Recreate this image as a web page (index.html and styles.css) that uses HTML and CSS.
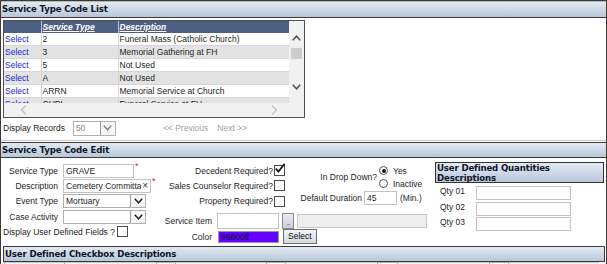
FILE: index.html
```html
<!DOCTYPE html>
<html>
<head>
<meta charset="utf-8">
<link rel="stylesheet" href="styles.css">
</head>
<body>
<div class="page">
  <div class="sec-head first">Service Type Code List</div>
  <div class="list-sec">
    <div class="gridbox">
      <div class="grid-main">
        <div class="grid-view">
          <table class="grid">
            <colgroup><col class="c1"><col class="c2"><col class="c3"></colgroup>
            <thead>
              <tr><th></th><th>Service Type</th><th>Description</th></tr>
            </thead>
            <tbody>
              <tr><td><a class="lnk">Select</a></td><td>2</td><td>Funeral Mass (Catholic Church)</td></tr>
              <tr class="alt"><td><a class="lnk">Select</a></td><td>3</td><td>Memorial Gathering at FH</td></tr>
              <tr><td><a class="lnk">Select</a></td><td>5</td><td>Not Used</td></tr>
              <tr class="alt"><td><a class="lnk">Select</a></td><td>A</td><td>Not Used</td></tr>
              <tr><td><a class="lnk">Select</a></td><td>ARRN</td><td>Memorial Service at Church</td></tr>
              <tr class="alt"><td><a class="lnk">Select</a></td><td>CHPL</td><td>Funeral Service at FH</td></tr>
            </tbody>
          </table>
        </div>
        <div class="hscroll">
          <svg width="7" height="10" viewBox="0 0 7 10"><polyline points="6,0.5 1.5,5 6,9.5" fill="none" stroke="#c4c4c4" stroke-width="1.4"/></svg>
          <svg width="7" height="10" viewBox="0 0 7 10"><polyline points="1,0.5 5.5,5 1,9.5" fill="none" stroke="#c4c4c4" stroke-width="1.4"/></svg>
        </div>
      </div>
      <div class="vscroll">
        <svg class="up" width="9" height="6" viewBox="0 0 9 6"><polyline points="0.8,5.2 4.5,1.2 8.2,5.2" fill="none" stroke="#505050" stroke-width="1.5"/></svg>
        <div class="thumb"></div>
        <svg class="down" width="9" height="6" viewBox="0 0 9 6"><polyline points="0.8,0.8 4.5,4.8 8.2,0.8" fill="none" stroke="#505050" stroke-width="1.5"/></svg>
      </div>
    </div>
    <div class="pager">
      <span class="lbl">Display Records</span>
      <span class="sel recs">
        <span class="val dim">50</span>
        <span class="btn"><svg width="9" height="6" viewBox="0 0 9 6"><polyline points="0.8,0.8 4.5,4.8 8.2,0.8" fill="none" stroke="#7a7a7a" stroke-width="1.3"/></svg></span>
      </span>
      <span class="pg prev">&lt;&lt; Previous</span>
      <span class="pg next">Next &gt;&gt;</span>
    </div>
  </div>

  <div class="sec-head">Service Type Code Edit</div>
  <div class="edit">
    <div class="col-a">
      <span class="lab">Service Type</span>
      <span class="fld"><span class="inp w70"><span class="txt">GRAVE</span></span><span class="req">*</span></span>
      <span class="lab">Description</span>
      <span class="fld"><span class="inp w87"><span class="txt">Cemetery Committal</span><span class="clr">×</span></span><span class="req">*</span></span>
      <span class="lab">Event Type</span>
      <span class="fld"><span class="sel w82"><span class="val">Mortuary</span><span class="btn"><svg width="9" height="6" viewBox="0 0 9 6"><polyline points="0.8,0.8 4.5,4.8 8.2,0.8" fill="none" stroke="#222" stroke-width="1.5"/></svg></span></span></span>
      <span class="lab">Case Activity</span>
      <span class="fld"><span class="sel w82"><span class="val"></span><span class="btn"><svg width="9" height="6" viewBox="0 0 9 6"><polyline points="0.8,0.8 4.5,4.8 8.2,0.8" fill="none" stroke="#222" stroke-width="1.5"/></svg></span></span></span>
      <span class="span-row">Display User Defined Fields ?<span class="cb"></span></span>
    </div>

    <div class="col-mid">
      <div class="mid-top">
        <div class="col-b">
          <span class="lab">Decedent Required?</span>
          <span class="cb"><svg width="12" height="12" viewBox="0 0 12 12"><polyline points="1.8,5.6 4.4,8.6 10.6,0.8" fill="none" stroke="#111" stroke-width="1.7"/></svg></span>
          <span class="lab">Sales Counselor Required?</span>
          <span class="cb"></span>
          <span class="lab">Property Required?</span>
          <span class="cb"></span>
        </div>
        <div class="col-c">
          <div class="dd-row">
            <span class="lab dd-lab">In Drop Down?</span>
            <span class="radios">
              <span class="radio-line"><span class="radio on"></span>Yes</span>
              <span class="radio-line"><span class="radio"></span>Inactive</span>
            </span>
          </div>
          <div class="dur-row">
            <span class="lab dur-lab">Default Duration</span>
            <span class="inp w32"><span class="txt">45</span></span>
            <span class="unit">(Min.)</span>
          </div>
        </div>
      </div>
      <div class="mid-bot">
        <div class="item-row">
          <span class="lab mlab">Service Item</span>
          <span class="inp w62 h16"></span>
          <span class="dots">...</span>
          <span class="inp dis"></span>
        </div>
        <div class="color-row">
          <span class="lab mlab">Color</span>
          <span class="color-box">#6600ff</span>
          <span class="btn-sel">Select</span>
        </div>
      </div>
    </div>

    <div class="col-d">
      <div class="box-head">User Defined Quantities Descriptions</div>
      <div class="qty">
        <span class="lab">Qty 01</span><span class="inp w95"></span>
        <span class="lab">Qty 02</span><span class="inp w95"></span>
        <span class="lab">Qty 03</span><span class="inp w95"></span>
      </div>
    </div>
  </div>

  <div class="sec-head boxed">User Defined Checkbox Descriptions</div>
  <div class="cb-row">
    <span class="cell" style="width:60px"></span>
    <span class="cell" style="width:92px"></span>
    <span class="cell white" style="width:19px"></span>
    <span class="cell" style="width:91px"></span>
    <span class="cell white" style="width:19px"></span>
    <span class="cell" style="width:92px"></span>
    <span class="cell white" style="width:20px"></span>
    <span class="cell" style="width:92px"></span>
    <span class="cell white" style="width:19px"></span>
    <span class="cell" style="width:91px"></span>
  </div>
</div>
</body>
</html>
```

FILE: styles.css
```css
html, body {
  margin: 0;
  padding: 0;
  background: #fff;
}
body {
  width: 607px;
  height: 264px;
  overflow: hidden;
}
.page {
  width: 605px;
  height: 263px;
  border: 1px solid #3a3a3a;
  border-bottom: 0;
  overflow: hidden;
  font-family: "Liberation Sans", Arial, sans-serif;
  font-size: 8.5px;
  color: #1e1e1e;
}

/* section headers */
.sec-head {
  box-sizing: border-box;
  height: 16px;
  line-height: 14px;
  padding-left: 1px;
  font-family: "DejaVu Sans", Verdana, sans-serif;
  font-weight: bold;
  font-size: 8.6px;
  letter-spacing: -0.15px;
  color: #0f1626;
  background: linear-gradient(#e3eaf2, #b7c7d9);
  border-top: 1px solid #3a3a3a;
  border-bottom: 1px solid #3a3a3a;
  margin-top: 1px;
  white-space: nowrap;
}
.sec-head.first {
  height: 17px;
  line-height: 15px;
  margin-top: 0;
  border-top: 1px solid #b8b8b8;
}
.sec-head.boxed {
  width: 602px;
  margin: 0 0 0 2px;
  border: 1px solid #3a3a3a;
  padding-left: 1px;
}

/* list section */
.list-sec {
  height: 120px;
  border-bottom: 1px solid #cacaca;
}
.gridbox {
  box-sizing: border-box;
  display: flex;
  width: 302px;
  height: 98px;
  margin: 2px 0 0 2px;
  border: 1px solid #505050;
}
.grid-main {
  width: 285px;
  display: flex;
  flex-direction: column;
}
.grid-view {
  height: 82px;
  overflow: hidden;
}
.grid {
  width: 285px;
  table-layout: fixed;
  border-collapse: collapse;
}
.grid .c1 { width: 37px; }
.grid .c2 { width: 77px; }
.grid .c3 { width: 171px; }
.grid th {
  height: 12px;
  padding: 0 1px;
  background: #4d6084;
  color: #fff;
  font-weight: bold;
  font-style: italic;
  text-decoration: underline;
  text-align: left;
  border-left: 1px solid #b9c3d2;
  line-height: 11px;
  white-space: nowrap;
}
.grid th:first-child { border-left: 0; }
.grid td {
  height: 12px;
  padding: 0 1px;
  line-height: 12px;
  border: 1px solid #d6d6d6;
  border-top: 0;
  white-space: nowrap;
  overflow: hidden;
}
.grid td:first-child { border-left: 0; }
.grid tr.alt td { background: #e3e3e3; }
.lnk { color: #1f1fd8; }
.hscroll {
  flex: 1;
  background: #f1f1f1;
  display: flex;
  align-items: center;
  justify-content: space-between;
  padding: 0 11px 0 16px;
}
.vscroll {
  width: 15px;
  background: #f1f1f1;
  display: flex;
  flex-direction: column;
  align-items: center;
}
.vscroll .up { margin-top: 14px; }
.vscroll .thumb {
  width: 11px;
  height: 11px;
  margin-top: 7px;
  background: #cdcdcd;
}
.vscroll .down { margin-top: 25px; }

.pager {
  height: 20px;
  display: flex;
  align-items: center;
  padding-left: 2px;
}
.pager .recs { margin-left: 8px; width: 43px; height: 15px; }
.dim { color: #8a8a8a; }
.pg { color: #a0a0a0; }
.pager .prev { margin-left: 47px; }
.pager .next { margin-left: 9px; }

/* form controls */
.inp, .sel {
  box-sizing: border-box;
  display: inline-flex;
  align-items: center;
  height: 14px;
  border: 1px solid #c2c2c2;
  background: #fff;
  overflow: hidden;
}
.sel { border-color: #b0b0b0; }
.inp .txt, .sel .val {
  flex: 1;
  padding-left: 2px;
  white-space: nowrap;
  overflow: hidden;
}
.sel .btn {
  box-sizing: border-box;
  width: 15px;
  height: 100%;
  display: flex;
  align-items: center;
  justify-content: center;
  border-left: 1px solid #9a9a9a;
  background: #f7f7f7;
}
.clr { padding: 0 2px 0 1px; font-size: 10px; color: #333; }
.req {
  color: #e02020;
  font-size: 9px;
  line-height: 7px;
  align-self: flex-start;
  margin-left: 1px;
}
.w70 { width: 71px; }
.w87 { width: 88px; }
.w82 { width: 83px; }
.w32 { width: 33px; }
.w62 { width: 62px; }
.w95 { width: 95px; }
.h16 { height: 16px; }

.cb {
  box-sizing: border-box;
  width: 11px;
  height: 11px;
  border: 1px solid #4a4a4a;
  background: #fff;
  display: inline-flex;
  align-items: flex-end;
  justify-content: flex-start;
  overflow: visible;
}
.cb svg { margin: 0 0 0 -1px; flex: none; }

/* edit section */
.edit {
  height: 88px;
  box-sizing: border-box;
  padding: 5px 0 0 2px;
  display: flex;
  align-items: flex-start;
}
.lab { text-align: right; white-space: nowrap; }
.col-a {
  width: 152px;
  display: grid;
  grid-template-columns: 55px auto;
  column-gap: 5px;
  grid-auto-rows: 15.33px;
  align-items: center;
}
.fld { display: flex; align-items: center; height: 100%; }
.span-row {
  grid-column: 1 / 3;
  display: flex;
  align-items: center;
  gap: 2px;
  white-space: nowrap;
}
.col-mid {
  width: 270px;
  margin-left: 5px;
}
.mid-top {
  display: flex;
  height: 46px;
}
.col-b {
  display: grid;
  grid-template-columns: 113px 11px;
  column-gap: 1px;
  grid-auto-rows: 15.33px;
  align-items: center;
}
.col-c { margin-left: 11px; }
.dd-row { display: flex; align-items: center; height: 26px; margin-top: 1px; }
.dd-lab { width: 81px; }
.radios { display: flex; flex-direction: column; margin-left: 2px; }
.radio-line { display: flex; align-items: center; height: 13px; gap: 5px; }
.radio {
  box-sizing: border-box;
  width: 9px;
  height: 9px;
  border: 1px solid #555;
  border-radius: 50%;
  background: #fff;
  display: flex;
  align-items: center;
  justify-content: center;
}
.radio.on::after {
  content: "";
  width: 4px;
  height: 4px;
  border-radius: 50%;
  background: #111;
}
.dur-row { display: flex; align-items: center; height: 15px; }
.dur-lab { width: 66px; }
.dur-row .inp { margin-left: 2px; }
.unit { margin-left: 3px; }

.mid-bot { margin-top: 3px; }
.item-row, .color-row { display: flex; align-items: center; }
.item-row { height: 17px; }
.color-row { height: 15px; }
.mlab { width: 52px; margin-right: 5px; }
.dots {
  box-sizing: border-box;
  width: 12px;
  height: 16px;
  margin-left: 3px;
  border: 1px solid #8c8c8c;
  background: linear-gradient(#e9edf2, #c7cdd6);
  color: #555;
  font-size: 7px;
  line-height: 18px;
  letter-spacing: -1px;
  text-align: center;
  overflow: hidden;
}
.inp.dis {
  width: 130px;
  margin-left: 3px;
  background: #efefef;
  border-color: #c6c6c6;
}
.color-box {
  box-sizing: border-box;
  width: 61px;
  height: 12px;
  margin-left: 1px;
  background: #6600ff;
  border: 1px solid #9a9a9a;
  color: #0c0a2a;
  line-height: 10px;
  padding-left: 2px;
}
.btn-sel {
  box-sizing: border-box;
  height: 15px;
  margin-left: 4px;
  padding: 0 4px;
  border: 1px solid #6e6e6e;
  background: linear-gradient(#f2f4f7, #d3d8e0);
  line-height: 13px;
  color: #111;
}

.col-d {
  width: 169px;
  margin-left: 5px;
  margin-top: -1px;
}
.box-head {
  box-sizing: border-box;
  height: 21px;
  border: 1px solid #333;
  background: linear-gradient(#e3eaf2, #b7c7d9);
  font-family: "DejaVu Sans", Verdana, sans-serif;
  font-weight: bold;
  font-size: 8.6px;
  letter-spacing: -0.15px;
  line-height: 10px;
  padding: 0 0 0 1px;
  color: #0f1626;
}
.qty {
  margin-top: 3px;
  display: grid;
  grid-template-columns: 30px 95px;
  column-gap: 11px;
  grid-auto-rows: 15.5px;
  align-items: start;
}

/* bottom row */
.cb-row {
  display: flex;
  height: 6px;
  margin: 0 0 0 3px;
}
.cell {
  box-sizing: border-box;
  height: 6px;
  border-top: 1px solid #c8c8c8;
  border-left: 1px solid #a8a8a8;
  background: #f4f4f4;
}
.cell.white { background: #fff; border-top-color: #b0b0b0; }
```
